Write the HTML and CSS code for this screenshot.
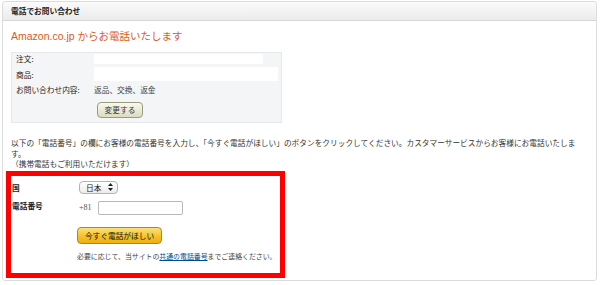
FILE: index.html
```html
<!DOCTYPE html>
<html lang="ja">
<head>
<meta charset="utf-8" />
<title>電話でお問い合わせ</title>
<link rel="stylesheet" href="styles.css">
</head>
<body>
<div class="panel">
    <div class="panel_head">電話でお問い合わせ</div>
    <div class="panel_body">
        <h1 class="title">Amazon.co.jp からお電話いたします</h1>

        <div class="info">
            <div class="info_row row_order">
                <div class="info_label">注文:</div>
                <div class="blank blank_order"></div>
            </div>
            <div class="info_row row_item">
                <div class="info_label">商品:</div>
                <div class="blank blank_item"></div>
            </div>
            <div class="info_row row_kind">
                <div class="info_label">お問い合わせ内容:</div>
                <div class="info_value">返品、交換、返金</div>
            </div>
            <div class="info_row row_btn">
                <div class="info_label"></div>
                <a class="btn_change" href="javascript:;">変更する</a>
            </div>
        </div>

        <p class="lead">以下の「電話番号」の欄にお客様の電話番号を入力し、「今すぐ電話がほしい」のボタンをクリックしてください。カスタマーサービスからお客様にお電話いたします。<br>（携帯電話もご利用いただけます）</p>

        <div class="callback">
            <div class="field_row row_country">
                <div class="field_label">国</div>
                <div class="select">
                    <span>日本</span>
                    <svg width="5" height="8" viewBox="0 0 5 8"><path d="M2.5 0 L5 3 L0 3 Z M0 5 L5 5 L2.5 8 Z" fill="#222"/></svg>
                </div>
            </div>
            <div class="field_row row_phone">
                <div class="field_label">電話番号</div>
                <span class="prefix">+81</span>
                <input class="phone" type="text" />
            </div>
            <div class="field_row row_call">
                <div class="field_label"></div>
                <a class="btn_call" href="javascript:;">今すぐ電話がほしい</a>
            </div>
            <div class="field_row row_note">
                <div class="field_label"></div>
                <div class="note">必要に応じて、当サイトの<a href="javascript:;">共通の電話番号</a>までご連絡ください。</div>
            </div>
        </div>
    </div>
</div>
</body>
</html>
```

FILE: styles.css
```css
* { padding: 0; margin: 0; box-sizing: border-box; }
body { background: #fff; font-family: "Noto Sans CJK JP", "Liberation Sans", sans-serif; font-size: 7.7px; color: #333; }
a { color: #004b91; }

.panel { margin: 1px 3px 0 2px; height: 280px; border: 1px solid #dcdcdc; border-radius: 3px; }
.panel_head { height: 19px; line-height: 18px; padding-left: 8px; font-weight: bold; color: #222; background: linear-gradient(#fbfbfb, #ebebeb); border-bottom: 1px solid #d8d8d8; border-radius: 3px 3px 0 0; }
.panel_body { padding: 0 10px 0 8px; }

.title { margin-top: 8px; font-size: 10.5px; line-height: 14px; font-weight: normal; color: #dd5a1c; font-family: "Liberation Sans", "Noto Sans CJK JP", sans-serif; }

.info { width: 271px; margin-top: 9px; padding: 0 1px 4px 4px; background: #f3f5f7; border: 1px solid #e6e8ea; }
.info_row { display: flex; align-items: center; }
.info_label { width: 78px; flex: none; color: #222; }
.row_order { height: 11px; }
.row_item { height: 14px; margin-top: 3px; }
.row_kind { height: 11px; margin-top: 3px; }
.row_btn { margin-top: 7px; }
.blank { background: #fff; }
.blank_order { width: 169px; height: 10px; }
.blank_item { width: 184px; height: 14px; }
.info_value { color: #444; }
.btn_change { display: inline-block; margin-left: 3px; width: 46px; height: 16px; line-height: 14px; text-align: center; color: #333; text-decoration: none; background: linear-gradient(#f9f9ec, #dcdcc0); border: 1px solid #9a9a7c; border-radius: 4px; }

.lead { width: 575px; margin-top: 15px; line-height: 10.5px; color: #333; }

.callback { width: 279px; height: 107px; margin: 1px 0 0 -5px; padding: 5px 0 0 1px; border: 5px solid #ff0000; }
.field_row { display: flex; align-items: center; }
.field_label { width: 67px; flex: none; font-weight: bold; color: #222; }
.row_country { height: 13px; }
.row_phone { height: 14px; margin-top: 7px; }
.row_phone .field_label { align-self: flex-start; line-height: 10px; }
.row_call { margin-top: 12px; }
.row_note { margin-top: 7px; line-height: 10px; }

.select { display: flex; align-items: center; justify-content: space-between; width: 39px; height: 13px; padding: 0 4px 0 6px; background: linear-gradient(#ffffff, #ececec); border: 1px solid #b4b4b4; border-radius: 4px; color: #222; }
.prefix { width: 19px; color: #555; font-family: "Liberation Serif", serif; font-size: 8px; }
.phone { width: 85px; height: 14px; border: 1px solid #b8b8b8; border-radius: 2px; background: #fff; outline: none; }
.btn_call { display: inline-block; margin-left: -2px; width: 85px; height: 17px; line-height: 15px; text-align: center; color: #111; text-decoration: none; background: linear-gradient(#fbe27c, #f3bf25 60%, #eeb00e); border: 1px solid #a88734; border-radius: 4px; }
.note { margin-left: -2px; font-size: 6.9px; color: #444; white-space: nowrap; }
```
